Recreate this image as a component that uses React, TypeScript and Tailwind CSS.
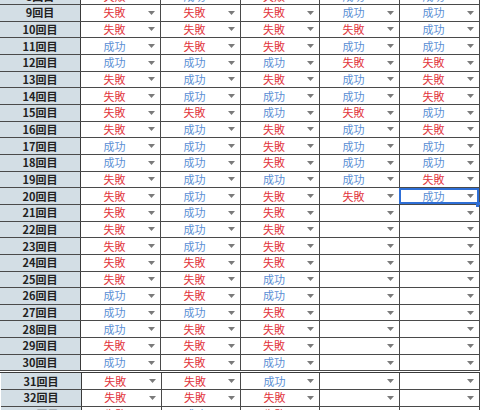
import React from 'react';

type V = 'F' | 'S' | '';

// rows of the sheet: label + five result cells (F = 失敗, S = 成功)
const upper: [number, V[]][] = [
  [9, ['F', 'F', 'F', 'S', 'S']],
  [10, ['F', 'F', 'F', 'F', 'S']],
  [11, ['S', 'F', 'F', 'S', 'S']],
  [12, ['S', 'S', 'S', 'F', 'F']],
  [13, ['F', 'S', 'F', 'S', 'F']],
  [14, ['F', 'S', 'S', 'S', 'F']],
  [15, ['F', 'F', 'S', 'F', 'S']],
  [16, ['F', 'S', 'F', 'S', 'F']],
  [17, ['S', 'S', 'F', 'S', 'S']],
  [18, ['S', 'S', 'F', 'S', 'S']],
  [19, ['F', 'S', 'S', 'S', 'F']],
  [20, ['F', 'S', 'F', 'F', 'S']],
  [21, ['F', 'S', 'F', '', '']],
  [22, ['F', 'S', 'F', '', '']],
  [23, ['F', 'S', 'F', '', '']],
  [24, ['F', 'F', 'F', '', '']],
  [25, ['F', 'F', 'S', '', '']],
  [26, ['S', 'F', 'S', '', '']],
  [27, ['S', 'S', 'F', '', '']],
  [28, ['S', 'F', 'F', '', '']],
  [29, ['F', 'F', 'F', '', '']],
  [30, ['S', 'F', 'S', '', '']],
];

const lower: [number, V[]][] = [
  [31, ['F', 'F', 'S', '', '']],
  [32, ['F', 'F', 'F', '', '']],
  [33, ['F', 'S', 'F', '', '']],
];

const widths = ['w-[80px]', 'w-[80px]', 'w-[79px]', 'w-[80px]', 'w-[80px]'];

function Arrow() {
  return (
    <svg width="7" height="4" viewBox="0 0 7 4" className="shrink-0">
      <path d="M0 0 L7 0 L3.5 4 Z" fill="#7a7a7a" />
    </svg>
  );
}

function Cell({ v, w, selected }: { v: V; w: string; selected?: boolean }) {
  return (
    <div className={`relative flex h-full items-center border-r border-[#4a4a4a] pr-[5px] ${w}`}>
      {selected && (
        <>
          <div className="pointer-events-none absolute inset-0 -left-px border-2 border-[#2f6fd6]" />
          <div className="absolute -bottom-[3px] -right-[2px] h-[5px] w-[5px] bg-[#2f6fd6]" />
        </>
      )}
      <span
        className={`flex-1 text-center text-[11px] leading-none ${v === 'F' ? 'text-[#e2343c]' : 'text-[#5a8ed4]'}`}
      >
        {v === 'F' ? '失敗' : v === 'S' ? '成功' : ''}
      </span>
      <Arrow />
    </div>
  );
}

function Row({ n, vals }: { n: number; vals: V[] }) {
  return (
    <div className="flex h-[16.67px] border-b border-[#4a4a4a]">
      <div className="flex h-full w-[81px] items-center justify-center border-r border-[#3a3a3a] bg-[#d3dee5] text-[11px] font-bold leading-none text-[#222]">
        {n}回目
      </div>
      {vals.map((v, i) => (
        <Cell key={i} v={v} w={widths[i]} selected={n === 20 && i === 4} />
      ))}
    </div>
  );
}

export default function App() {
  return (
    <div
      className="h-[410px] w-[480px] overflow-hidden bg-white"
      style={{ fontFamily: '"Noto Sans CJK JP", "Noto Sans", sans-serif' }}
    >
      {/* partially visible row 8 */}
      <div className="h-[5px] overflow-hidden">
        <div className="-mt-[11.67px]">
          <Row n={8} vals={['F', 'S', 'F', 'S', 'S']} />
        </div>
      </div>
      {upper.map(([n, vals]) => (
        <Row key={n} n={n} vals={vals} />
      ))}
      <div className="h-[2px] border-b border-[#3a3a3a]" />
      <div className="pl-px">
        {lower.map(([n, vals]) => (
          <Row key={n} n={n} vals={vals} />
        ))}
      </div>
    </div>
  );
}
